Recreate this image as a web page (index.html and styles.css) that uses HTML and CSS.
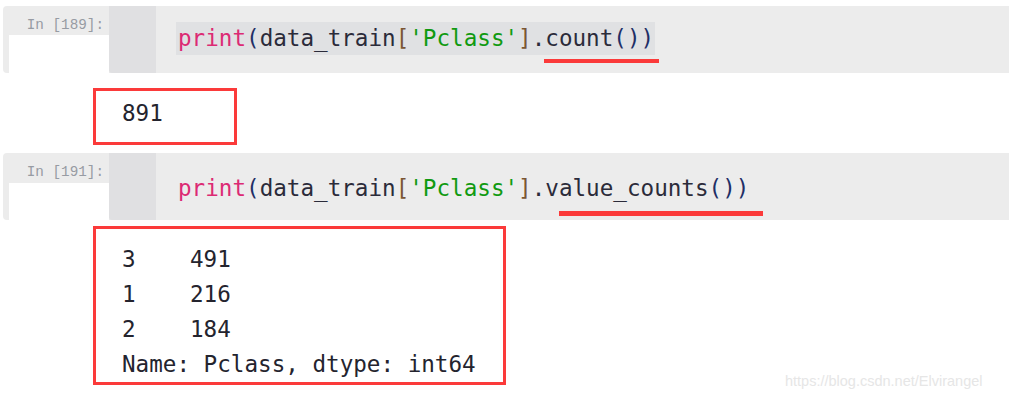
FILE: index.html
```html
<!DOCTYPE html>
<html>
<head>
<meta charset="utf-8">
<link rel="stylesheet" href="styles.css">
</head>
<body>
<div class="page">
  <div class="cell cell-first">
    <div class="prompt">
      <div class="prompt-head">In [189]:</div>
      <div class="prompt-blank"></div>
    </div>
    <div class="gutter"></div>
    <div class="code">
      <div class="line line-first"><span class="hl"><span class="kw">print</span><span class="par">(</span>data_train<span class="brk">[</span><span class="str">'Pclass'</span><span class="brk">]</span>.count<span class="par">())</span></span></div>
      <div class="mark mark-one"></div>
    </div>
  </div>

  <div class="out out-one"><div class="row">891</div></div>

  <div class="cell cell-second">
    <div class="prompt">
      <div class="prompt-head prompt-head-tall">In [191]:</div>
      <div class="prompt-blank"></div>
    </div>
    <div class="gutter"></div>
    <div class="code">
      <div class="line line-second"><span class="kw">print</span><span class="par">(</span>data_train<span class="brk">[</span><span class="str">'Pclass'</span><span class="brk">]</span>.value_counts<span class="par">())</span></div>
      <div class="mark mark-two"></div>
    </div>
  </div>

  <div class="out out-two">
    <div class="row">3    491</div>
    <div class="row">1    216</div>
    <div class="row">2    184</div>
    <div class="row">Name: Pclass, dtype: int64</div>
  </div>

  <div class="watermark">https://blog.csdn.net/Elvirangel</div>
</div>
</body>
</html>
```

FILE: styles.css
```css
html, body {
  margin: 0;
  padding: 0;
  background: #ffffff;
  overflow: hidden;
}

.page {
  position: relative;
  width: 1009px;
  height: 402px;
  padding: 6px 0 0 3px;
  box-sizing: border-box;
  font-family: "DejaVu Sans Mono", "Liberation Mono", monospace;
}

.cell {
  display: flex;
  width: 1020px;
  height: 67px;
  background: #ececec;
  border-radius: 4px 0 0 4px;
}

.prompt {
  width: 106px;
  flex: 0 0 106px;
  display: flex;
  flex-direction: column;
  padding-left: 6px;
  box-sizing: border-box;
}

.prompt-head {
  height: 29px;
  box-sizing: border-box;
  padding: 10px 5px 0 0;
  line-height: 19px;
  font-family: "Liberation Mono", "DejaVu Sans Mono", monospace;
  font-size: 14.3px;
  color: #979ba3;
  text-align: right;
  border-right: 3px solid #f2c48e;
  margin-right: -3px;
  white-space: nowrap;
}

.prompt-head-tall {
  height: 30px;
}

.prompt-blank {
  flex: 1;
  background: #ffffff;
}

.gutter {
  width: 47px;
  flex: 0 0 47px;
  background: #e0e0e2;
  border-radius: 0 0 0 3px;
}

.code {
  flex: 1;
  position: relative;
  padding-left: 20px;
  font-size: 22.6px;
  color: #2b2b3a;
}

.line {
  line-height: 33px;
  height: 33px;
  white-space: pre;
}

.line-first {
  margin-top: 16px;
}

.line-second {
  margin-top: 19px;
  padding-left: 2px;
}

.hl {
  display: inline-block;
  background: #e0e1e3;
  padding: 0 1px 0 2px;
}

.kw { color: #dc2a74; }
.par { color: #1f2f66; }
.brk { color: #7a5634; }
.str { color: #119a11; }

.mark {
  position: absolute;
  background: #fb3a3a;
}

.mark-one {
  left: 388px;
  top: 53px;
  width: 115px;
  height: 4px;
}

.mark-two {
  left: 403px;
  top: 58px;
  width: 204px;
  height: 5px;
}

.out {
  border: 3px solid #fb3a3a;
  margin-left: 90px;
  box-sizing: border-box;
  padding-left: 26px;
  font-size: 22.6px;
  line-height: 35px;
  color: #24242e;
}

.row {
  white-space: pre;
  height: 35px;
}

.out-one {
  width: 144px;
  height: 57px;
  margin-top: 15px;
  padding-top: 5px;
}

.cell-second {
  margin-top: 8px;
}

.out-two {
  width: 413px;
  height: 159px;
  margin-top: 6px;
  padding-top: 13px;
}

.watermark {
  position: absolute;
  left: 785px;
  top: 373px;
  font-family: "Liberation Sans", Arial, sans-serif;
  font-size: 14.5px;
  color: #e6e6e6;
  white-space: nowrap;
}
```
